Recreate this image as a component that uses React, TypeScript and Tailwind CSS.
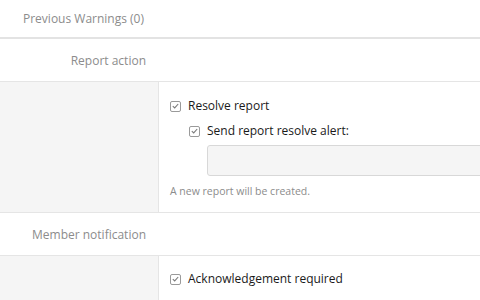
import React from 'react'

const font = { fontFamily: '"Open Sans", "Noto Sans", sans-serif' }

function Check({ label }: { label: string }) {
  return (
    <label className="flex items-center gap-[7px] text-[12px] text-[#1a1a1a] leading-[18px]">
      <span className="flex h-[11px] w-[11px] items-center justify-center rounded-[2px] border border-[#9a9a9a] bg-white">
        <svg width="7" height="6" viewBox="0 0 7 6" fill="none">
          <path d="M0.8 3.1 L2.7 4.9 L6.2 1" stroke="#7a7a7a" strokeWidth="1.1" />
        </svg>
      </span>
      {label}
    </label>
  )
}

function SectionHead({ title }: { title: string }) {
  return (
    <div className="flex h-[43px] items-center border-b border-[#e5e5e5]">
      <div className="w-[158px] pr-[12px] pt-[2px] text-right text-[12px] text-[#8c8c8c]">{title}</div>
    </div>
  )
}

export default function App() {
  return (
    <div className="h-[300px] w-[480px] overflow-hidden bg-white" style={font}>
      <div className="flex h-[39px] items-center border-b-2 border-[#e3e3e3] pl-[23px] text-[12px] text-[#8c8c8c]">
        Previous Warnings (0)
      </div>

      <SectionHead title="Report action" />

      <div className="flex h-[131px] border-b border-[#e5e5e5]">
        <div className="w-[159px] shrink-0 border-r border-[#e5e5e5] bg-[#f5f5f5]" />
        <div className="flex flex-1 flex-col pl-[11px] pt-[15px]">
          <Check label="Resolve report" />
          <div className="mt-[7px] pl-[19px]">
            <Check label="Send report resolve alert:" />
            <div className="mt-[5px] ml-[18px] h-[31px] w-[300px] rounded-[3px] border border-[#d8d8d8] bg-[#f5f5f5]" />
          </div>
          <div className="mt-[8px] text-[10.5px] text-[#8c8c8c]">A new report will be created.</div>
        </div>
      </div>

      <SectionHead title="Member notification" />

      <div className="flex h-[60px]">
        <div className="w-[159px] shrink-0 border-r border-[#e5e5e5] bg-[#f5f5f5]" />
        <div className="flex flex-1 flex-col pl-[11px] pt-[14px]">
          <Check label="Acknowledgement required" />
        </div>
      </div>
    </div>
  )
}
